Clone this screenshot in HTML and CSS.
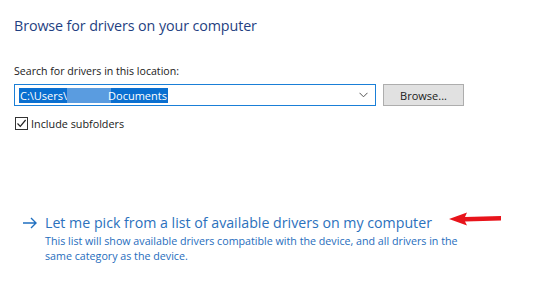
FILE: index.html
```html
<!DOCTYPE html>
<html lang="en">
<head>
    <meta charset="UTF-8">
    <title>Browse for drivers</title>
    <link rel="stylesheet" href="styles.css">
</head>
<body>
    <div class="page">
        <h1 class="title">Browse for drivers on your computer</h1>

        <div class="search-label">Search for drivers in this location:</div>
        <div class="search-row">
            <div class="path-box">
                <span class="path-sel">C:\Users\<span class="redact"></span>Documents</span>
                <svg class="chevron" width="9" height="6" viewBox="0 0 9 6">
                    <path d="M0.5 0.8 L4.5 4.8 L8.5 0.8" fill="none" stroke="#555" stroke-width="1"/>
                </svg>
            </div>
            <button class="browse-btn">Browse...</button>
        </div>

        <label class="check-row">
            <span class="check-box">
                <svg width="11" height="11" viewBox="0 0 11 11">
                    <path d="M1.5 5.5 L4.3 8.3 L9.6 2" fill="none" stroke="#222" stroke-width="1.2"/>
                </svg>
            </span>
            Include subfolders
        </label>

        <div class="pick">
            <div class="pick-head">
                <svg class="pick-arrow" width="16" height="12" viewBox="0 0 16 12">
                    <path d="M1 6 H14 M9 1 L14 6 L9 11" fill="none" stroke="#1f6fc0" stroke-width="1.4"/>
                </svg>
                <span class="pick-title">Let me pick from a list of available drivers on my computer</span>
                <svg class="red-arrow" width="54" height="14" viewBox="0 0 54 14">
                    <path d="M0 7 L18 0.5 L16 5 L52 4 L52 8.5 L16 9.5 L18 13.5 Z" fill="#e8141b"/>
                </svg>
            </div>
            <p class="pick-desc">This list will show available drivers compatible with the device, and all drivers in the same category as the device.</p>
        </div>
    </div>
</body>
</html>
```

FILE: styles.css
```css
* {
    margin: 0;
    padding: 0;
    box-sizing: border-box;
}

body {
    font-family: 'Open Sans', 'Noto Sans', sans-serif;
    background: #fff;
    color: #1a1a1a;
    overflow: hidden;
}

.page {
    padding: 16px 14px 0 14px;
}

.title {
    font-size: 14.3px;
    font-weight: normal;
    color: #1f3f82;
    letter-spacing: -0.1px;
    line-height: 20px;
}

.search-label {
    margin-top: 27px;
    font-size: 10.6px;
    line-height: 16px;
}

.search-row {
    display: flex;
    align-items: center;
    margin-top: 5px;
}

.path-box {
    width: 362px;
    height: 22px;
    border: 1px solid #1a7fd7;
    display: flex;
    align-items: center;
    justify-content: space-between;
    padding: 0 7px 0 4px;
}

.path-sel {
    display: flex;
    align-items: center;
    background: #0a6fd0;
    color: #fff;
    font-size: 11px;
    line-height: 15px;
    padding: 0 1px;
}

.redact {
    display: inline-block;
    width: 44px;
    height: 15px;
    margin-right: -3px;
    background: #5a9ce0;
}

.browse-btn {
    margin-left: 7px;
    width: 81px;
    height: 22px;
    background: #e1e1e1;
    border: 1px solid #adadad;
    font-family: inherit;
    font-size: 11px;
    color: #1a1a1a;
}

.check-row {
    display: flex;
    align-items: center;
    gap: 3px;
    margin-top: 10px;
    margin-left: 1px;
    font-size: 10.8px;
}

.check-box {
    width: 13px;
    height: 13px;
    border: 1px solid #333;
    display: flex;
    align-items: center;
    justify-content: center;
}

.pick {
    margin-top: 83px;
    padding-left: 8px;
}

.pick-head {
    display: flex;
    align-items: center;
}

.pick-arrow {
    margin-right: 7px;
}

.pick-title {
    font-size: 14.2px;
    color: #2b71bd;
    line-height: 18px;
}

.red-arrow {
    margin-left: 17px;
    margin-top: -8px;
}

.pick-desc {
    margin-top: 2px;
    margin-left: 23px;
    font-size: 10.7px;
    line-height: 14.5px;
    color: #1f6dbd;
    width: 440px;
}
```
